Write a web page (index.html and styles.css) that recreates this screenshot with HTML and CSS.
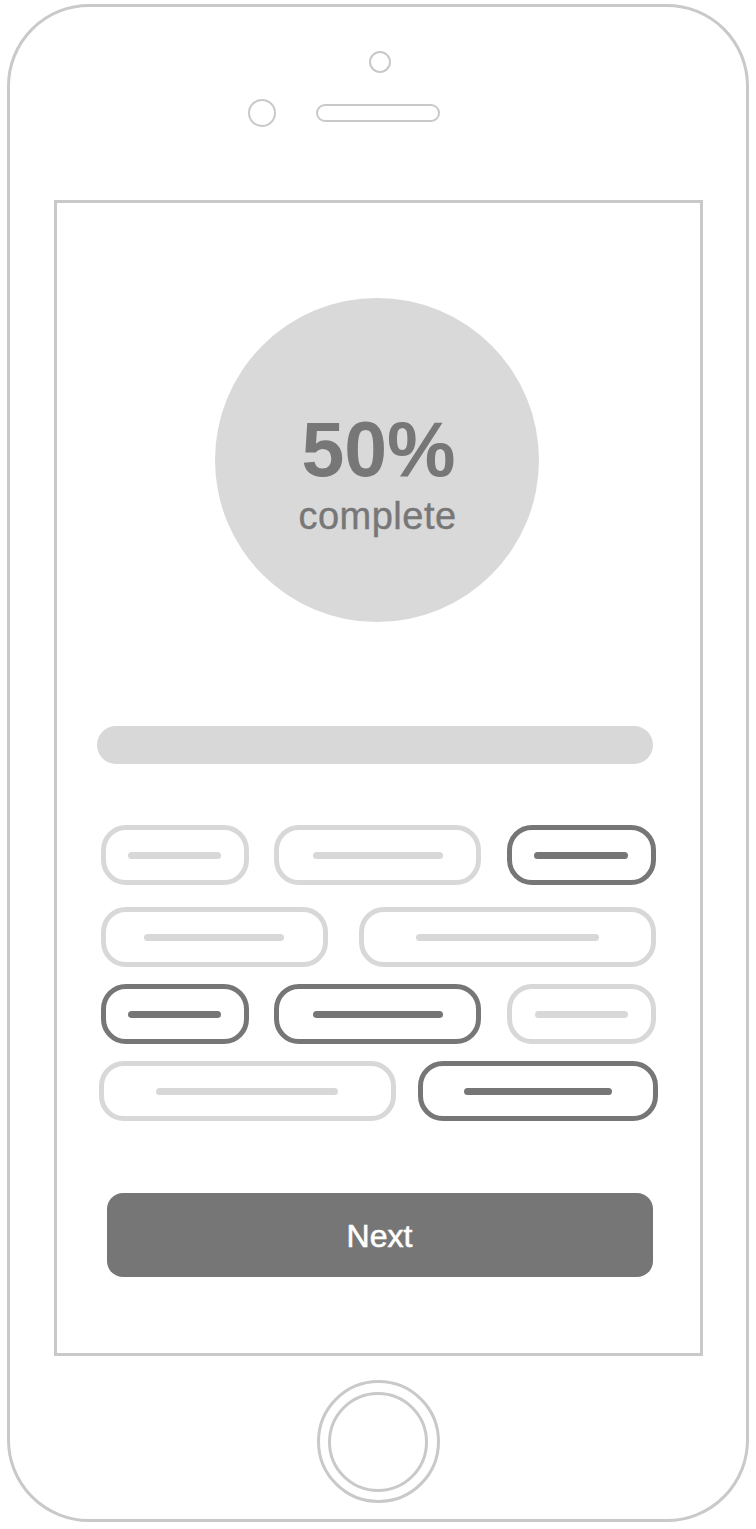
FILE: index.html
```html
<!DOCTYPE html>
<html lang="en">
<head>
<meta charset="utf-8">
<title>Progress</title>
<link rel="stylesheet" href="styles.css">
</head>
<body>
<div class="phone">
  <div class="camera"></div>
  <div class="ear-row">
    <div class="sensor"></div>
    <div class="speaker"></div>
    <div></div>
  </div>
  <div class="screen">
    <div class="ring">
      <div class="pct">50%</div>
      <div class="pct-label">complete</div>
    </div>
    <div class="bar"></div>
    <div class="chips">
      <div class="chip-row">
        <div class="chip w148"><span class="chip-line l93"></span></div>
        <div class="chip w207"><span class="chip-line l130"></span></div>
        <div class="chip w149 on"><span class="chip-line l94"></span></div>
      </div>
      <div class="chip-row r2">
        <div class="chip w227"><span class="chip-line l140"></span></div>
        <div class="chip w297"><span class="chip-line l183"></span></div>
      </div>
      <div class="chip-row r3">
        <div class="chip w148 on"><span class="chip-line l93"></span></div>
        <div class="chip w207 on"><span class="chip-line l130"></span></div>
        <div class="chip w149"><span class="chip-line l93"></span></div>
      </div>
      <div class="chip-row r4">
        <div class="chip w297"><span class="chip-line l182"></span></div>
        <div class="chip w240 on"><span class="chip-line l148"></span></div>
      </div>
    </div>
    <button class="next-btn">Next</button>
  </div>
  <div class="home"><div class="home-inner"></div></div>
</div>
</body>
</html>
```

FILE: styles.css
```css
* { box-sizing: border-box; }
html, body { margin: 0; padding: 0; background: #ffffff; }
body { font-family: "Liberation Sans", Arial, Helvetica, sans-serif; }

.phone {
  width: 742px;
  height: 1518px;
  margin: 4px 0 0 7px;
  border: 3px solid #c9c9c9;
  border-radius: 82px;
  display: flex;
  flex-direction: column;
  align-items: center;
  padding-top: 44px;
}

.camera {
  width: 22px;
  height: 22px;
  border: 2.5px solid #c9c9c9;
  border-radius: 50%;
  margin-left: 4px;
}

.ear-row {
  width: 100%;
  margin-top: 26px;
  display: grid;
  grid-template-columns: 1fr 124px 1fr;
  align-items: center;
}
.sensor {
  justify-self: end;
  margin-right: 40px;
  width: 28px;
  height: 28px;
  border: 2.5px solid #c9c9c9;
  border-radius: 50%;
}
.speaker {
  height: 18px;
  border: 2.5px solid #c9c9c9;
  border-radius: 9px;
}

.screen {
  margin-top: 73px;
  width: 649px;
  height: 1156px;
  border: 3px solid #c9c9c9;
  display: flex;
  flex-direction: column;
  align-items: flex-start;
}

.ring {
  align-self: center;
  margin-top: 95px;
  margin-right: 3px;
  width: 324px;
  height: 324px;
  border-radius: 50%;
  background: #d9d9d9;
  display: flex;
  flex-direction: column;
  align-items: center;
  padding-top: 113px;
  color: #777777;
}
.pct {
  font-size: 77px;
  font-weight: bold;
  line-height: 1;
  margin-left: 4px;
}
.pct-label {
  margin-top: 9px;
  font-size: 38px;
  line-height: 1;
  letter-spacing: 0.5px;
  margin-left: 2px;
  -webkit-text-stroke: 0.4px #777777;
}

.bar {
  margin: 104px 0 0 40px;
  width: 556px;
  height: 38px;
  border-radius: 19px;
  background: #d8d8d8;
}

.chips {
  margin: 61px 0 0 44px;
  width: 555px;
}
.chip-row {
  display: flex;
  justify-content: space-between;
}
.chip-row.r2 { margin-top: 22px; }
.chip-row.r3 { margin-top: 17px; }
.chip-row.r4 { margin: 17px -2px 0 -2px; }

.chip {
  height: 60px;
  border: 5px solid #d8d8d8;
  border-radius: 25px;
  display: flex;
  align-items: center;
  justify-content: center;
}
.chip-line {
  display: block;
  height: 7px;
  border-radius: 4px;
  background: #d8d8d8;
}
.chip.on { border-color: #767676; }
.chip.on .chip-line { background: #767676; }

.w148 { width: 148px; }
.w149 { width: 149px; }
.w207 { width: 207px; }
.w227 { width: 227px; }
.w240 { width: 240px; }
.w297 { width: 297px; }
.l93 { width: 93px; }
.l94 { width: 94px; }
.l130 { width: 130px; }
.l140 { width: 140px; }
.l148 { width: 148px; }
.l182 { width: 182px; }
.l183 { width: 183px; }

.next-btn {
  margin: 72px 0 0 50px;
  width: 546px;
  height: 84px;
  border: none;
  border-radius: 16px;
  background: #767676;
  color: #ffffff;
  font-family: "Liberation Sans", Arial, Helvetica, sans-serif;
  font-size: 32px;
  -webkit-text-stroke: 0.6px #ffffff;
  padding: 3px 0 0 0;
  display: flex;
  align-items: center;
  justify-content: center;
}

.home {
  margin-top: 24px;
  width: 123px;
  height: 123px;
  border: 3px solid #c9c9c9;
  border-radius: 50%;
  display: flex;
  align-items: center;
  justify-content: center;
}
.home-inner {
  width: 100px;
  height: 100px;
  border: 3px solid #c9c9c9;
  border-radius: 50%;
}
```
